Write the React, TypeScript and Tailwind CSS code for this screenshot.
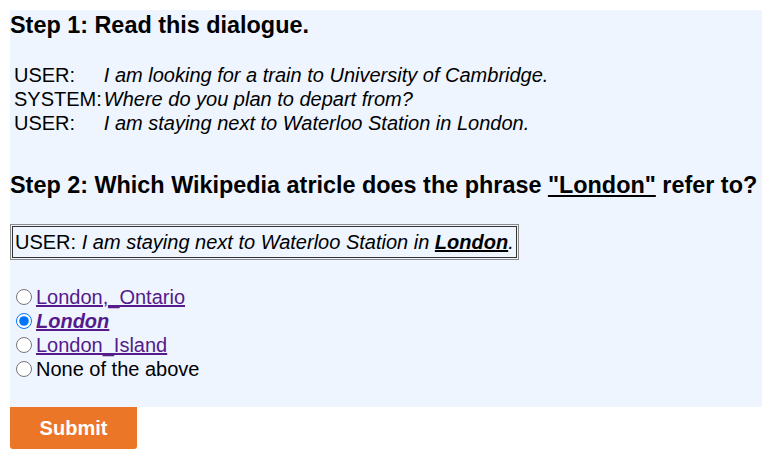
import React from "react";

export default function App() {
  return (
    <div className="p-[10px] pb-0 text-black" style={{ fontFamily: '"Liberation Sans", Arial, sans-serif' }}>
      <div className="w-[752px] bg-[#eef5ff] pt-[1px] pb-[26px]">
        <h3 className="text-[23.4px] leading-[28px] font-bold">Step 1: Read this dialogue.</h3>
        <table className="mt-[23px] ml-[2px] text-[20px] leading-[22px] border-separate border-spacing-[2px]">
          <tbody>
            <tr>
              <td className="p-0 h-[22px] align-middle">USER:</td>
              <td className="p-0 italic">I am looking for a train to University of Cambridge.</td>
            </tr>
            <tr>
              <td className="p-0 h-[22px] align-middle">SYSTEM:</td>
              <td className="p-0 italic">Where do you plan to depart from?</td>
            </tr>
            <tr>
              <td className="p-0 h-[22px] align-middle">USER:</td>
              <td className="p-0 italic">I am staying next to Waterloo Station in London.</td>
            </tr>
          </tbody>
        </table>
        <h3 className="mt-[35px] text-[23.4px] leading-[28px] font-bold">
          Step 2: Which Wikipedia atricle does the phrase <span className="underline">"London"</span> refer to?
        </h3>
        <div className="mt-[25px] inline-block border border-[#8a8a8a] p-[1px]">
          <div className="border border-[#333] px-[2px] py-[3px] text-[20px] leading-[24px]">
            USER: <i>I am staying next to Waterloo Station in </i>
            <i className="font-bold underline">London</i>
            <i>.</i>
          </div>
        </div>
        <div className="mt-[25px] flex flex-col text-[20px]">
          {[
            { label: "London,_Ontario", link: true, checked: false },
            { label: "London", link: true, checked: true },
            { label: "London_Island", link: true, checked: false },
            { label: "None of the above", link: false, checked: false },
          ].map((o) => (
            <label key={o.label} className="flex items-center h-[24px] leading-[24px]">
              <input
                type="radio"
                name="choice"
                defaultChecked={o.checked}
                className="m-0 ml-[6px] mr-[4px] w-[16px] h-[16px]"
              />
              {o.link ? (
                <a
                  href="#"
                  className={
                    o.checked
                      ? "text-[#551a8b] underline font-bold italic"
                      : "text-[#551a8b] underline"
                  }
                >
                  {o.label}
                </a>
              ) : (
                <span>{o.label}</span>
              )}
            </label>
          ))}
        </div>
      </div>
      <button className="block w-[127px] h-[42px] bg-[#eb7628] text-white font-bold text-[20px] rounded-b-[3px]">
        Submit
      </button>
    </div>
  );
}
